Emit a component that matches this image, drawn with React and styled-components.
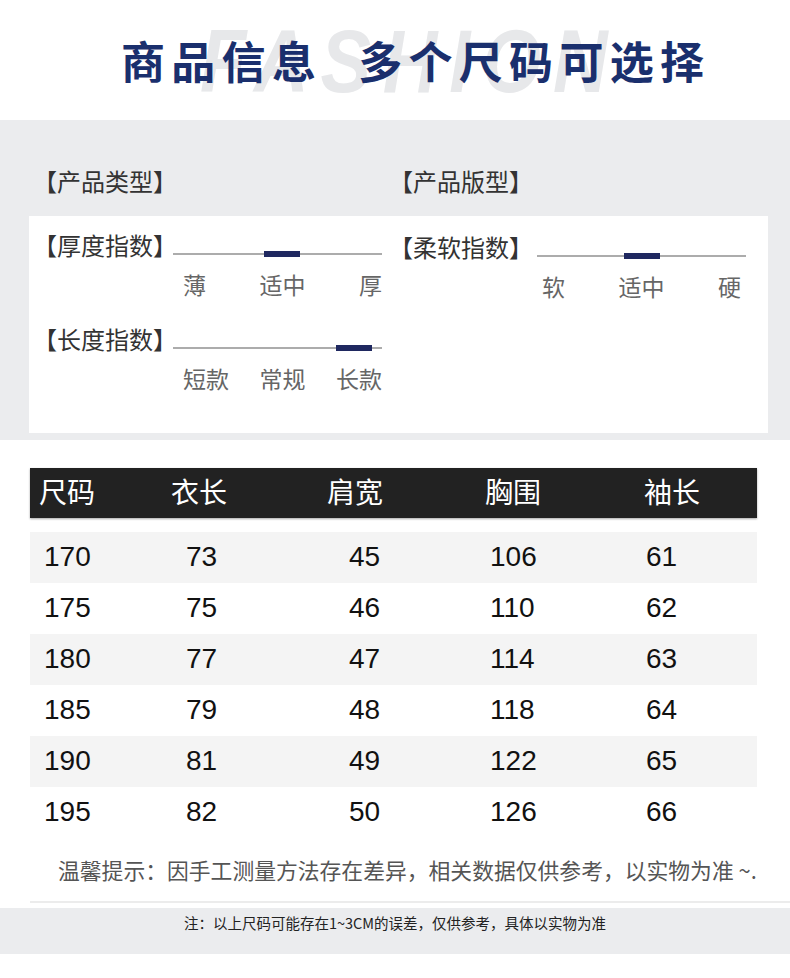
import React from 'react';
import styled, { createGlobalStyle } from 'styled-components';

const GlobalStyle = createGlobalStyle`
  body {
    margin: 0;
    background: #fff;
    font-family: "Noto Sans CJK SC", "Noto Sans", sans-serif;
  }
`;

const Page = styled.div`
  width: 790px;
  background: #fff;
`;

const TitleBar = styled.header`
  position: relative;
  height: 120px;
  display: flex;
  align-items: center;
  padding-left: 121px;
  box-sizing: border-box;
  overflow: hidden;
`;

const Watermark = styled.span`
  position: absolute;
  left: 200px;
  top: 17px;
  font-family: "Liberation Sans", Arial, sans-serif;
  font-size: 89px;
  font-weight: 700;
  font-style: italic;
  color: #e7e8ea;
  letter-spacing: 14px;
  line-height: 1;
  transform: scaleX(0.85);
  transform-origin: left top;
`;

const Title = styled.h1`
  position: relative;
  display: flex;
  gap: 36px;
  margin: 0;
  font-size: 44px;
  line-height: 1;
  font-weight: 700;
  color: #1a2f6d;
  letter-spacing: 6.3px;
`;

const InfoBand = styled.section`
  background: #ebecee;
  padding: 46px 22px 7px 29px;
`;

const Columns = styled.div`
  display: grid;
  grid-template-columns: 360px 1fr;
`;

const Heading = styled.div`
  padding-left: ${p => p.$inset || 0}px;
  font-size: 24px;
  line-height: 30px;
  color: #333;
`;

const Card = styled(Columns)`
  margin-top: 20px;
  background: #fff;
  padding: 14px 0 40px;
`;

const Column = styled.div`
  display: flex;
  flex-direction: column;
  gap: 25px;
  padding-left: ${p => p.$inset || 0}px;
  padding-top: ${p => p.$drop || 0}px;
`;

const IndexRow = styled.div`
  display: flex;
  align-items: flex-start;
`;

const IndexLabel = styled.div`
  font-size: 24px;
  line-height: 30px;
  color: #333;
  width: ${p => p.$width}px;
  flex-shrink: 0;
  white-space: nowrap;
`;

const Slider = styled.div`
  width: 209px;
`;

const Track = styled.div`
  position: relative;
  height: 6px;
  margin-top: 21px;
  &::before {
    content: '';
    position: absolute;
    left: 0;
    right: 0;
    top: 2px;
    height: 2px;
    background: #acacac;
  }
`;

const Marker = styled.span`
  position: absolute;
  top: 0;
  width: 36px;
  height: 6px;
  background: #1f2860;
`;

const Ticks = styled.div`
  display: flex;
  justify-content: space-between;
  margin-top: 12px;
  padding: 0 ${p => p.$right}px 0 ${p => p.$left}px;
  font-size: 23px;
  line-height: 30px;
  color: #666;
`;

const TableSection = styled.section`
  padding: 28px 33px 0 30px;
`;

const HeadRow = styled.div`
  display: grid;
  grid-template-columns: 132px 156px 158px 159px 1fr;
  align-items: center;
  height: 50px;
  padding: 0 0 4px 9px;
  box-sizing: border-box;
  background: #222;
  box-shadow: 0 1px 2px rgba(0, 0, 0, 0.35);
  color: #fff;
  font-size: 28px;
`;

const Rows = styled.div`
  margin-top: 14px;
`;

const DataRow = styled.div`
  display: grid;
  grid-template-columns: 142px 163px 141px 156px 1fr;
  align-items: center;
  height: 51px;
  padding: 0 0 2px 14px;
  box-sizing: border-box;
  background: ${p => (p.$shaded ? '#f4f4f4' : '#fff')};
  font-family: "Liberation Sans", Arial, sans-serif;
  font-size: 28px;
  color: #111;
`;

const Note = styled.p`
  margin: 17px 0 0 58px;
  font-size: 21.8px;
  line-height: 30px;
  color: #555;
  white-space: nowrap;
`;

const Divider = styled.div`
  margin: 16px 0 0 30px;
  height: 2px;
  background: #ececec;
`;

const Footer = styled.footer`
  margin-top: 5px;
  height: 46px;
  background: #ebecee;
  padding-top: 5px;
  box-sizing: border-box;
  text-align: center;
  font-size: 14.5px;
  line-height: 20px;
  color: #222;
`;

const Bottom = styled.div`
  height: 24px;
`;

const sizes = [
  ['170', '73', '45', '106', '61'],
  ['175', '75', '46', '110', '62'],
  ['180', '77', '47', '114', '63'],
  ['185', '79', '48', '118', '64'],
  ['190', '81', '49', '122', '65'],
  ['195', '82', '50', '126', '66'],
];

const IndexMeter = ({ label, ticks, marker, labelWidth, left = 10, right = 0 }) => (
  <IndexRow>
    <IndexLabel $width={labelWidth}>{label}</IndexLabel>
    <Slider>
      <Track>
        <Marker style={{ left: marker }} />
      </Track>
      <Ticks $left={left} $right={right}>
        {ticks.map(t => <span key={t}>{t}</span>)}
      </Ticks>
    </Slider>
  </IndexRow>
);

export default function App() {
  return (
    <Page>
      <GlobalStyle />
      <TitleBar>
        <Watermark>FASHION</Watermark>
        <Title>
          <span>商品信息</span>
          <span>多个尺码可选择</span>
        </Title>
      </TitleBar>

      <InfoBand>
        <Columns>
          <Heading $inset={4}>【产品类型】</Heading>
          <Heading>【产品版型】</Heading>
        </Columns>
        <Card>
          <Column $inset={4}>
            <IndexMeter label="【厚度指数】" ticks={['薄', '适中', '厚']} marker={91} labelWidth={140} />
            <IndexMeter label="【长度指数】" ticks={['短款', '常规', '长款']} marker={163} labelWidth={140} />
          </Column>
          <Column $drop={2}>
            <IndexMeter label="【柔软指数】" ticks={['软', '适中', '硬']} marker={87} labelWidth={148} left={5} right={5} />
          </Column>
        </Card>
      </InfoBand>

      <TableSection>
        <HeadRow>
          <span>尺码</span>
          <span>衣长</span>
          <span>肩宽</span>
          <span>胸围</span>
          <span>袖长</span>
        </HeadRow>
        <Rows>
          {sizes.map((row, i) => (
            <DataRow key={row[0]} $shaded={i % 2 === 0}>
              {row.map((v, j) => <span key={j}>{v}</span>)}
            </DataRow>
          ))}
        </Rows>
      </TableSection>

      <Note>温馨提示：因手工测量方法存在差异，相关数据仅供参考，以实物为准 ~.</Note>
      <Divider />
      <Footer>注：以上尺码可能存在1~3CM的误差，仅供参考，具体以实物为准</Footer>
      <Bottom />
    </Page>
  );
}
